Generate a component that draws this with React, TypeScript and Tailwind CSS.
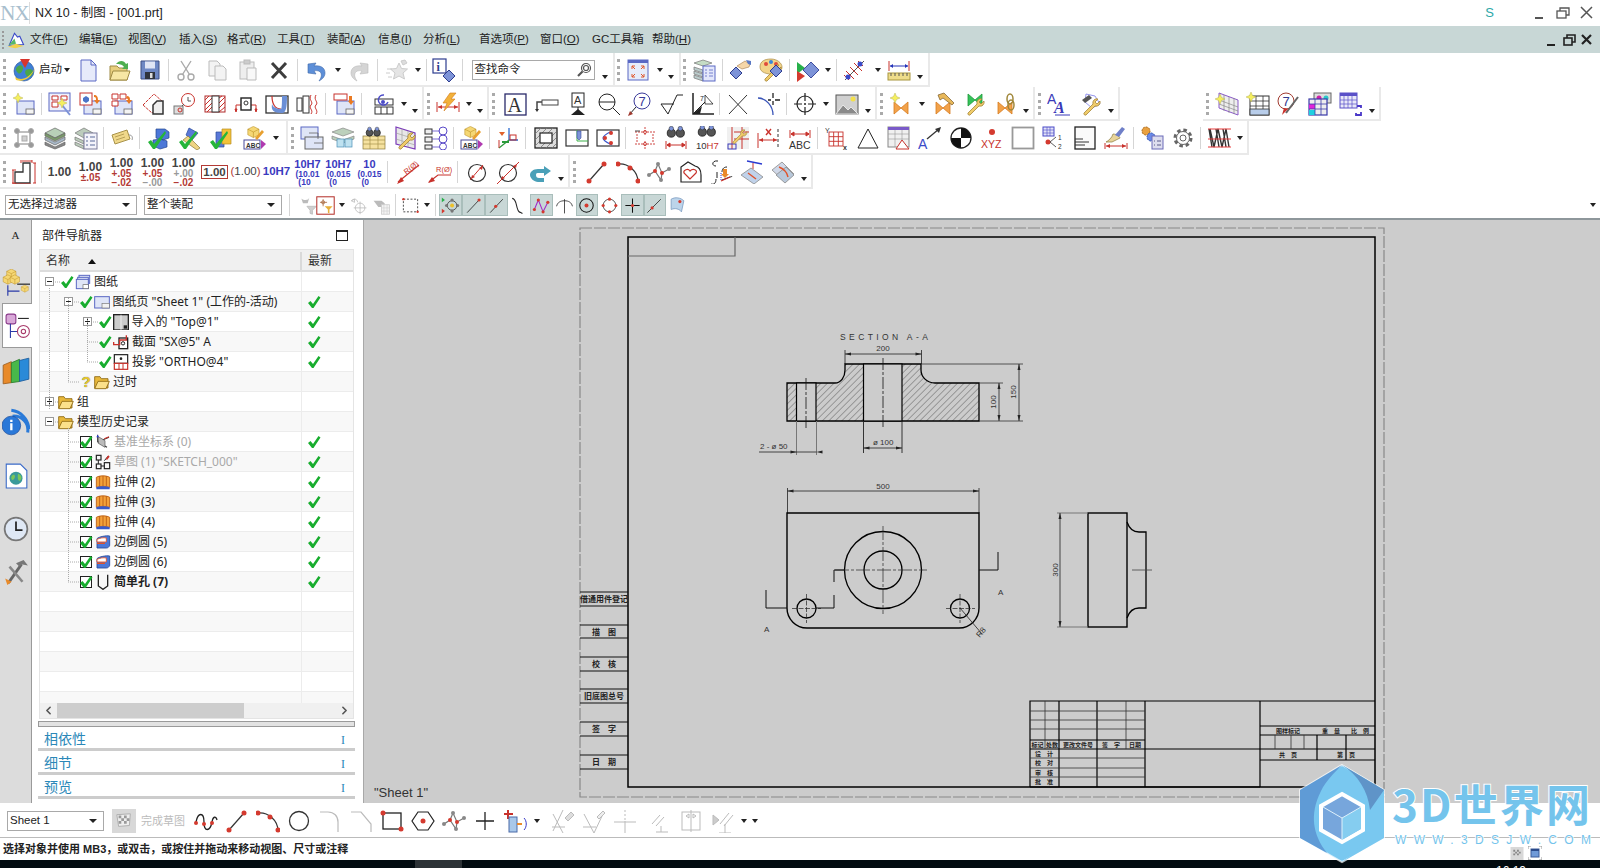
import React from "react";
import { ChevronLeft, ChevronRight } from "lucide-react";

const Dot = ({ x, y, c = "#d43a2f", r = 2 }: { x: number; y: number; c?: string; r?: number }) => (
  <circle cx={x} cy={y} r={r} fill={c} stroke="none" />
);

const RED = "#c8322c";
const BLU = "#5a68c4";
const Sht = () => (
  <>
    <rect x="5" y="9" width="17" height="13" fill="#dfe5f7" stroke={BLU} />
    <rect x="14" y="17" width="8" height="5" fill="#f4f4f4" stroke="#666" strokeWidth="0.8" />
  </>
);
const Spark = ({ x = 4, y = 5 }: { x?: number; y?: number }) => (
  <path transform={`translate(${x} ${y})`} d="M0-5 1.5-1.5 5 0 1.5 1.5 0 5-1.5 1.5-5 0-1.5-1.5z" fill="#f5ef5e" stroke="#b9b25a" strokeWidth=".5" />
);
const Wr = () => (
  <path d="M6 21l9-9a4 4 0 0 1 5-5l-3 3 2 2 3-3a4 4 0 0 1-5 5l-9 9a1.5 1.5 0 0 1-2-2z" fill="#f0cc6a" stroke="#a5853a" strokeWidth=".8" />
);
const Dia = ({ x = 8, y = 18 }: { x?: number; y?: number }) => (
  <path d={`M${x} ${y - 6}l6 6-6 6-6-6z`} fill="#7d93d8" stroke="#2e3d8f" />
);
const Ck = () => <path d="M2 16l3-2 3 4L19 5l1 2L9 23H7z" fill="#25b53a" stroke="none" />;
const Bow = ({ c = "#f2a24a" }: { c?: string }) => <path d="M5 10l7 6 7-6v12l-7-6-7 6z" fill={c} stroke="#d77b1f" strokeWidth=".8" />;
const Cube = () => (
  <>
    <path d="M12 2l8 4v8l-8 4-8-4V6z" fill="#f5d774" stroke="#b98d22" strokeWidth=".8" />
    <path d="M4 6l8 4 8-4M12 10v8" stroke="#b98d22" strokeWidth=".8" />
  </>
);
const DimL = ({ y = 20 }: { y?: number }) => (
  <path d={`M2 ${y - 4}v8M22 ${y - 4}v8M3 ${y}h18M3 ${y}l3-2v4zM21 ${y}l-3-2v4z`} stroke={RED} fill={RED} strokeWidth="1" />
);
const Binoc = () => (
  <>
    <circle cx="7" cy="9" r="4.5" fill="#555" stroke="#222" />
    <circle cx="17" cy="9" r="4.5" fill="#555" stroke="#222" />
    <circle cx="7" cy="4" r="2.5" fill="#7d93d8" stroke="#333" strokeWidth=".6" />
    <circle cx="17" cy="4" r="2.5" fill="#7d93d8" stroke="#333" strokeWidth=".6" />
  </>
);
const Grd = ({ x, y, w, h, c = "#444" }: { x: number; y: number; w: number; h: number; c?: string }) => (
  <g stroke={c} strokeWidth=".9" fill="none">
    <rect x={x} y={y} width={w} height={h} />
    <path d={`M${x + w / 3} ${y}v${h}M${x + (2 * w) / 3} ${y}v${h}M${x} ${y + h / 3}h${w}M${x} ${y + (2 * h) / 3}h${w}`} />
  </g>
);
const Ab = () => (
  <>
    <g transform="translate(2 -1) scale(.7)"><Cube /></g>
    <rect x="1" y="14" width="16" height="9" fill="#fff" stroke="#4a4a9a" />
    <text x="3" y="21.5" fontSize="6.5" fontWeight="700" fill="#333" stroke="none" fontFamily="Liberation Sans">ABC</text>
    <path d="M18 14l5 4-5 5z" fill="#b03ab0" stroke="none" />
    <path d="M12 12l7-8 2 2-7 8z" fill="#e8a030" stroke="none" />
  </>
);

const ICONS: Record<string, React.ReactNode> = {
  globe: (
    <>
      <circle cx="12" cy="13" r="10" fill="#3f7fd6" stroke="#1e4c96" strokeWidth=".6" />
      <path d="M5 9c3-3 6-2 6 1s-3 7-5 5-3-4-1-6zM14 12c3-2 7-1 7 2s-3 6-5 5-4-5-2-7z" fill="#4ba648" stroke="none" />
      <path d="M3 19c6 4 14 2 20-9-3 9-11 15-19 12z" fill="#f1cb3c" stroke="none" />
      <path d="M8 1h10l-5 9z" fill="#d8352d" stroke="none" />
    </>
  ),
  file: (
    <>
      <path d="M5 2h10l5 5v16H5z" fill="#e6eafa" stroke={BLU} />
      <path d="M15 2v5h5" stroke={BLU} />
    </>
  ),
  folder: (
    <>
      <path d="M3 8h7l2 2h8v12H3z" fill="#e8cf7e" stroke="#9f8b45" />
      <path d="M3 22l3-9h17l-3 9z" fill="#f7e7a4" stroke="#9f8b45" />
      <path d="M9 6c3-4 8-4 10 0l2-1v6h-6l2-2c-2-3-5-3-8-3z" fill="#4fae4f" stroke="none" />
    </>
  ),
  save: (
    <>
      <path d="M3 3h18v18H3z" fill="#6e88c4" stroke="#3c4f84" />
      <rect x="7" y="3.5" width="10" height="7" fill="#dfe5f5" stroke="none" />
      <rect x="7" y="14" width="10" height="7" fill="#30343c" stroke="none" />
      <rect x="12" y="15" width="2.5" height="5" fill="#ddd" stroke="none" />
    </>
  ),
  cut: (
    <g stroke="#aaa" strokeWidth="1.4">
      <circle cx="7" cy="19" r="3" />
      <circle cx="17" cy="19" r="3" />
      <path d="M8.5 16.5L17 3M15.5 16.5L7 3" />
    </g>
  ),
  copy: (
    <g stroke="#bbb" fill="#f3f3f3">
      <path d="M4 3h8l3 3v12H4z" />
      <path d="M10 8h8l3 3v11H10z" />
    </g>
  ),
  paste: (
    <g stroke="#bbb" fill="#eee">
      <rect x="4" y="4" width="14" height="17" />
      <rect x="8" y="2" width="6" height="4" fill="#ccc" />
      <path d="M11 10h9v12h-9z" fill="#f8f8f8" />
    </g>
  ),
  del: <path d="M5 5l14 15M19 5L5 20" stroke="#3d3d3d" strokeWidth="3" />,
  undo: <path d="M3 6l8-1-2 3c7-1 11 2 11 7 0 3-2 6-6 8 2-3 3-5 2-8-1-2-4-3-7-2l2 3-8-1z" fill="#5d8fd8" stroke="#3e68aa" strokeWidth=".6" />,
  redo: <path d="M21 6l-8-1 2 3c-7-1-11 2-11 7 0 3 2 6 6 8-2-3-3-5-2-8 1-2 4-3 7-2l-2 3 8-1z" fill="#d5d5d5" stroke="#bbb" strokeWidth=".6" />,
  star: (
    <g stroke="#ccc" fill="#e5e5e5">
      <path d="M14 5l2.500 5.500 6 .5-4.500 4 1.500 6-5.500-3-5.500 3 1.500-6-4.500-4 6-.5z" />
      <path d="M2 11h5M1 15h4M3 19h4" />
      <path d="M16 3l4-1 2 3-4 2z" fill="#ddd" />
    </g>
  ),
  info: (
    <>
      <rect x="1" y="1" width="13" height="14" fill="#fff" stroke="#2e3d8f" strokeWidth="1.200" />
      <text x="4.500" y="12.500" fontSize="12" fontWeight="700" fill="#2e3d8f" stroke="none" fontFamily="Liberation Serif">i</text>
      <path d="M17 12l6 6-6 6-6-6z" fill="#7d93d8" stroke="#2e3d8f" />
    </>
  ),
  fit: (
    <>
      <rect x="2" y="2" width="20" height="20" fill="#e6ecfa" stroke={BLU} />
      <rect x="2" y="2" width="20" height="3" fill={BLU} stroke="none" />
      <path d="M6 8l3 3M6 8h3M6 8v3M18 8l-3 3M18 8h-3M18 8v3M6 19l3-3M6 19h3M6 19v-3M18 19l-3-3M18 19h-3M18 19v-3" stroke="#e0562a" />
    </>
  ),
  layers: (
    <>
      <path d="M2 5l9-3 9 3-9 3z" fill="#c5dcc5" stroke="#777" strokeWidth=".7" />
      <path d="M2 9l9 3v3l-9-3zM2 13l9 3v3l-9-3zM2 17l9 3v3l-9-3z" fill="#bcc" stroke="#777" strokeWidth=".7" />
      <rect x="11" y="8" width="12" height="15" fill="#e3e7fb" stroke={BLU} />
      <path d="M13 12h2M17 12h4M13 15h2M17 15h4M13 18h2M17 18h4" stroke={BLU} strokeWidth=".8" />
    </>
  ),
  hand: (
    <>
      <Dia x={8} y={15} />
      <path d="M9 8l8-5 5 3-1 3-7 2z" fill="#f5d6a8" stroke="#a57a4a" strokeWidth=".6" />
      <path d="M18 2l5 1v4l-3-1z" fill="#5a78c4" stroke="none" />
    </>
  ),
  palette: (
    <>
      <path d="M12 1c6 0 11 4 11 8s-4 4-6 4-2 3-5 3-11-1-11-7 5-8 11-8z" fill="#f2d48a" stroke="#a88840" strokeWidth=".7" />
      <Dot x={7} y={6} c="#e04a3a" />
      <Dot x={12} y={4} c="#3a88d8" />
      <Dot x={17} y={6} c="#e04a3a" />
      <Wr />
      <Dia x={17} y={13} />
    </>
  ),
  playd: (
    <>
      <path d="M2 4l8 6-8 6z" fill="#27b04a" stroke="none" />
      <path d="M2 13l8 5-8 6z" fill="#d43a2f" stroke="none" />
      <path d="M16 4l8 8-8 8-8-8z" fill="#7d93d8" stroke="#3e4d9f" />
    </>
  ),
  antenna: (
    <>
      <path d="M3 22L22 3" stroke="#555" />
      <path d="M4 13l8 8M8 9l8 8M12 5l8 8M2 17l5 5M16 3l5 5" stroke={RED} />
      <Dot x={18} y={6} c="#3a4ac8" r={2.500} />
      <Dot x={6} y={19} c="#3a4ac8" r={2.500} />
    </>
  ),
  ruler: (
    <>
      <rect x="1" y="15" width="22" height="7" fill="#eedc8a" stroke="#a8963f" />
      <path d="M4 15v3M8 15v3M12 15v3M16 15v3M20 15v3" stroke="#555" />
      <path d="M2 3v10M22 3v10" stroke={RED} />
      <path d="M3 8h18" stroke="#2433b8" />
      <path d="M3 8l3-2v4zM21 8l-3-2v4z" fill="#2433b8" stroke="none" />
    </>
  ),
  newsheet: (<><Sht /><Spark x={6} y={6} /></>),
  wand: (
    <>
      <rect x="1" y="1" width="21" height="18" fill="#eef0fb" stroke={BLU} />
      <path d="M4 4h6v4H4zM13 4h6v4h-6zM4 10h6v5H4z" stroke={RED} fill="#fff" />
      <path d="M14 13l8 10" stroke="#7d93d8" strokeWidth="2" />
      <Spark x={14} y={11} />
    </>
  ),
  sheetcube: (
    <>
      <Sht />
      <rect x="1" y="1" width="12" height="12" fill="#fff" stroke={RED} />
      <path d="M4 6l3-2 3 2v3l-3 2-3-2z" fill="#4c74c8" stroke="none" />
      <path d="M15 3c3 0 4 2 4 5h2l-3 4-3-4h2c0-2 0-3-2-3z" fill="#ea7a22" stroke="none" />
    </>
  ),
  gridsheet: (
    <>
      <Sht />
      <path d="M2 2h6v5H2zM10 2h6v5h-6zM2 9h6v5H2z" stroke={RED} fill="#fff" />
      <path d="M17 4c2 0 3 1 3 4h2l-3 4-3-4h2c0-1-1-2-2-2z" fill="#ea7a22" stroke="none" />
    </>
  ),
  sect: (
    <>
      <path d="M2 13L13 2l9 8-11 11z" fill="#fff" stroke={RED} strokeDasharray="3 1" />
      <path d="M12 22V13l4-4h6v13z" fill="#eee" stroke="#333" strokeWidth="1.500" />
    </>
  ),
  detail: (
    <>
      <rect x="2" y="14" width="9" height="8" fill="#ddd" stroke="#777" />
      <circle cx="8" cy="18" r="2" stroke={RED} />
      <circle cx="16" cy="8" r="6.500" fill="#fff" stroke={RED} />
      <path d="M10 14l2-2M16 5v4h3" stroke="#555" />
    </>
  ),
  hatch: (
    <>
      <rect x="2" y="4" width="20" height="16" fill="#fff" stroke="#b02a2a" />
      <path d="M2 8l4-4M2 13l7-7M2 18l7-7M4 20l5-5M16 6l3-2M16 11l6-6M16 16l6-6M16 20l6-5" stroke="#c8322c" />
      <rect x="9" y="4" width="7" height="16" fill="#fff" stroke="#333" />
    </>
  ),
  projsec: (
    <>
      <path d="M2 17V13h20v4" stroke={RED} />
      <rect x="7" y="6" width="10" height="12" fill="#fff" stroke="#222" strokeWidth="1.400" />
      <circle cx="12" cy="11" r="2" />
      <path d="M2 20l-1-3h2zM22 20l-1-3h2z" fill={RED} stroke={RED} />
    </>
  ),
  curve: (
    <>
      <rect x="1" y="4" width="22" height="17" fill="#fff" stroke="#333" strokeWidth="1.300" />
      <path d="M7 4c0 8 3 13 9 13" stroke={RED} strokeWidth="1.200" />
      <path d="M17 4c0 4 0 13-1 13-3 0-8-1-9-5-1 6 1 9 10 9 4 0 5-6 5-17z" fill="#6b8fd6" stroke="none" />
    </>
  ),
  broken: (
    <>
      <rect x="1" y="6" width="5" height="13" fill="#fff" />
      <rect x="7" y="4" width="6" height="17" fill="#fff" />
      <path d="M15 3c-3 5 3 7 0 10s3 5 0 9M20 3c-3 5 3 7 0 10s3 5 0 9" stroke={RED} />
    </>
  ),
  sheetarrow: (
    <>
      <Sht />
      <rect x="2" y="2" width="13" height="6" fill="#fff" stroke={RED} />
      <path d="M17 4h3v5h2l-3 4-3-4h1z" fill="#ea7a22" stroke="none" />
    </>
  ),
  swap: (
    <>
      <rect x="4" y="7" width="18" height="6" fill="#fff" />
      <rect x="4" y="15" width="18" height="7" fill="#fff" />
      <path d="M10 15v7M16 15v7" />
      <path d="M13 3a5 5 0 1 0 4 7" stroke="#4b4bc8" strokeWidth="1.500" />
      <circle cx="12" cy="10" r="2" fill="#4b4bc8" stroke="none" />
    </>
  ),
  bolt: (
    <>
      <path d="M1 10v10M23 10v10M2 15h20" stroke={RED} />
      <path d="M2 15l4-2v4zM22 15l-4-2v4z" fill={RED} stroke="none" />
      <path d="M14 1h6l-5 6h4L8 19l3-8H7z" fill="#f2b13a" stroke="#d2781a" strokeWidth=".6" />
    </>
  ),
  abox: (
    <>
      <rect x="1" y="2" width="21" height="21" fill="#fff" stroke="#2a2a6a" strokeWidth="1.300" />
      <text x="3.500" y="20" fontSize="20" fill="#333" stroke="none" fontFamily="Liberation Serif">A</text>
    </>
  ),
  flag: (
    <>
      <rect x="7" y="8" width="16" height="5" fill="#fff" stroke="#444" />
      <path d="M7 10H2v7" stroke="#444" strokeWidth="1.500" />
      <path d="M0 17h4l-2 3z" fill="#333" stroke="none" />
    </>
  ),
  abal: (
    <>
      <rect x="6" y="1" width="12" height="14" fill="#fff" stroke="#222" />
      <text x="8" y="12" fontSize="11" fill="#333" stroke="none" fontFamily="Liberation Sans">A</text>
      <path d="M12 15v3" stroke="#222" />
      <path d="M12 17l7 6H5z" fill="#222" stroke="none" />
    </>
  ),
  zoomc: (
    <>
      <circle cx="10" cy="10" r="8" fill="#fff" stroke="#222" />
      <path d="M2 10h16M16 16l7 7" stroke="#222" />
    </>
  ),
  seven: (
    <>
      <circle cx="14" cy="9" r="8" fill="#fff" stroke="#3a3a9a" />
      <text x="10.500" y="14" fontSize="13" fill="#3a3a9a" stroke="none" fontFamily="Liberation Sans">7</text>
      <path d="M8 15L1 23" stroke="#222" />
      <path d="M0 24l2-5 3 3z" fill="#a13a2f" stroke="none" />
    </>
  ),
  sqrt: <path d="M2 12l7 10L18 3h6M2 12h13" stroke="#222" />,
  angle: (
    <>
      <path d="M3 1v21h21" stroke="#222" strokeWidth="1.500" />
      <path d="M3 22l9-8-2 8z" fill="#222" stroke="none" />
      <path d="M3 22L17 8" stroke="#222" />
      <path d="M15 3l8 9H15z" fill="#fff" stroke="#222" strokeWidth=".8" />
      <text x="10" y="9" fontSize="7" fill="#222" stroke="none" fontFamily="Liberation Sans">7</text>
    </>
  ),
  xx: <path d="M3 3l18 19M21 3L3 22" stroke="#333" />,
  corner: (
    <>
      <path d="M1 6c8 0 15 8 15 17" stroke="#3a55b8" strokeWidth="1.300" />
      <path d="M16 1v5M16 9v4M11 8h3M18 8h5" stroke="#222" strokeWidth="1.300" />
    </>
  ),
  target: (
    <>
      <circle cx="12" cy="12" r="8" stroke="#222" strokeWidth="1.200" />
      <path d="M12 1v8M12 15v8M1 12h8M15 12h8" stroke="#222" strokeWidth="1.200" />
      <Dot x={12} y={12} c="#222" r={1} />
    </>
  ),
  photo: (
    <>
      <rect x="1" y="3" width="22" height="19" fill="#d0d0d0" stroke="#555" />
      <path d="M1 22l7-9 5 5 3-3 7 7z" fill="#8a8a8a" stroke="#fff" strokeWidth=".7" />
      <circle cx="18" cy="7" r="2.500" fill="#f3e04c" stroke="none" />
    </>
  ),
  bow1: (<><Bow /><Spark x={6} y={6} /></>),
  bow2: (
    <>
      <Bow />
      <path d="M7 3l6-2 10 10-2 2-9-7-3 2z" fill="#e8b85a" stroke="#7a5a2a" strokeWidth=".7" />
    </>
  ),
  bow3: (
    <>
      <path d="M6 2l7 6 7-6v12l-7-6-7 6z" fill="#34c25a" stroke="#1f9a3a" strokeWidth=".8" />
      <Wr />
    </>
  ),
  bow4: (
    <>
      <Bow />
      <ellipse cx="17" cy="7" rx="3" ry="5" stroke="#a0873a" strokeWidth="1.500" />
      <ellipse cx="18" cy="13" rx="3" ry="5" stroke="#a0873a" strokeWidth="1.500" />
    </>
  ),
  astyle: (
    <>
      <text x="0" y="12" fontSize="14" fill="#3a3ab8" stroke="none" fontFamily="Liberation Sans">A</text>
      <text x="7" y="21" fontSize="16" fontWeight="700" fontStyle="italic" fill="#3a3ab8" stroke="none" fontFamily="Liberation Serif">A</text>
      <path d="M8 23h15" stroke="#3a3ab8" />
    </>
  ),
  wrencha: (
    <>
      <path d="M8 2l9 2 5 8-8 4-7-6z" fill="#fff" stroke="#7a7ae8" strokeWidth=".8" />
      <path d="M4 8l7-5 3 3-7 5z" fill="#555" stroke="none" />
      <Wr />
    </>
  ),
  tnew: (
    <>
      <path d="M4 1l19 7v15L4 16z" fill="#eee" stroke="#8a5ac8" />
      <path d="M9 3v16M14 5v16M19 6v16M4 8l19 7M4 12l19 7" stroke="#888" strokeWidth=".7" />
      <Spark x={5} y={7} />
    </>
  ),
  tgrid: (
    <>
      <rect x="4" y="4" width="19" height="19" fill="#fff" stroke="#333" />
      <path d="M4 9h19M4 14h19M4 19h19M10 4v19M17 4v19" stroke="#333" strokeWidth=".8" />
      <rect x="4" y="17" width="19" height="6" fill="#b8cdea" stroke="#333" strokeWidth=".8" />
      <Spark x={5} y={5} />
    </>
  ),
  t7: (
    <>
      <circle cx="9" cy="9" r="8" fill="#fff" stroke="#a13a2f" />
      <text x="5.500" y="14" fontSize="13" fill="#333a8f" stroke="none" fontFamily="Liberation Sans">7</text>
      <path d="M21 5L9 21" stroke="#666" strokeWidth="2" />
      <path d="M11 17l-6 6 2-7z" fill="#c8322c" stroke="none" />
    </>
  ),
  tcolor: (
    <>
      <rect x="6" y="1" width="17" height="10" fill="#ddd" stroke="#666" />
      <Dot x={11} y={6} c="#d020a8" r={2.500} />
      <Dot x={18} y={6} c="#28c8c8" r={2.500} />
      <rect x="1" y="7" width="18" height="16" fill="#eee" stroke="#3a3aa8" strokeWidth="1.200" />
      <rect x="1" y="12" width="6" height="5" fill="#e024d8" stroke="none" />
      <rect x="1" y="18" width="6" height="5" fill="#20d0e0" stroke="none" />
      <path d="M7 7v16M13 7v16M1 12h18M1 17h18" stroke="#3a3aa8" strokeWidth=".8" />
    </>
  ),
  tlink: (
    <>
      <rect x="1" y="1" width="17" height="15" fill="#e8e8f8" stroke="#5a50c8" />
      <rect x="1" y="1" width="17" height="3" fill="#5a50c8" stroke="none" />
      <path d="M5 4v12M9 4v12M13 4v12M1 8h17M1 12h17" stroke="#5a50c8" strokeWidth=".7" />
      <path d="M18 14h4v2M22 20v3h-5v-2" stroke="#4a38c8" strokeWidth="1.800" />
    </>
  ),
  nodes: (
    <g stroke="#aaa" fill="#d0d0d0">
      <rect x="6" y="6" width="12" height="12" fill="none" strokeWidth="1.500" />
      <circle cx="5" cy="5" r="2.500" fill="#999" />
      <circle cx="19" cy="5" r="2.500" fill="#999" />
      <circle cx="5" cy="19" r="2.500" fill="#999" />
      <circle cx="19" cy="19" r="2.500" fill="#999" />
      <rect x="10" y="10" width="5" height="5" />
    </g>
  ),
  stack: (
    <g stroke="#666" strokeWidth=".7">
      <path d="M2 7l10-5 10 5-10 5z" fill="#b8d0b8" />
      <path d="M2 11l10 5 10-5v3l-10 5-10-5z" fill="#a8b8c8" />
      <path d="M2 16l10 5 10-5v3l-10 4-10-4z" fill="#888" />
      <path d="M2 7v3l10 5 10-5V7l-10 5z" fill="#7a9a6a" />
    </g>
  ),
  stacklist: (
    <>
      <g stroke="#777" strokeWidth=".7" fill="#bcccbc">
        <path d="M1 7l9-5 9 5-9 5zM1 11l9 4v3l-9-4zM1 16l9 4v3l-9-4z" />
      </g>
      <rect x="10" y="7" width="13" height="16" fill="#f4f4fb" stroke="#7a7a9a" />
      <path d="M12 11h2M16 11h5M12 15h2M16 15h5M12 19h2M16 19h5" stroke="#5a6a9a" />
    </>
  ),
  tag: (
    <>
      <path d="M2 9l15-5 3 9-15 5z" fill="#f0d88a" stroke="#a8924a" />
      <path d="M5 11l9-3M6 14l9-3" stroke="#a8924a" strokeWidth=".8" />
      <path d="M19 9c3 0 4 2 3 5" stroke="#999" />
    </>
  ),
  chk1: (
    <>
      <path d="M10 3h9l4 3v6l-6 2-7-2zM7 14l8-1 6 2v6l-7 2-7-3z" fill="#4c78d8" stroke="#27488f" strokeWidth=".7" />
      <Ck />
    </>
  ),
  chk2: (
    <>
      <path d="M12 2l9 5-6 7-6-5z" fill="#5a78d8" stroke="#2a4a9a" strokeWidth=".7" />
      <path d="M6 14l5-4 12 12-3 2z" fill="#efd484" stroke="#8a7a3a" strokeWidth=".7" />
      <Ck />
    </>
  ),
  chk3: (
    <>
      <path d="M8 6h8v15H8z" fill="#5a78d8" stroke="#2a4a9a" strokeWidth=".7" />
      <path d="M14 3h9v15h-9z" fill="#f2c23a" stroke="#b98d22" strokeWidth=".7" />
      <Ck />
    </>
  ),
  abc: <Ab />,
  sheets: (
    <>
      <rect x="1" y="1" width="17" height="12" fill="#dfe5f7" stroke={BLU} />
      <rect x="5" y="11" width="18" height="12" fill="#dfe5f7" stroke="#666" />
      <path d="M9 7h9v6M14 17h9" stroke="#666" strokeWidth=".8" />
    </>
  ),
  stack2: (
    <>
      <g stroke="#888" strokeWidth=".7" fill="#bcd0bc">
        <path d="M1 6l11-4 11 4-11 4zM1 10l11 4 11-4v3l-11 4-11-4z" />
      </g>
      <rect x="6" y="13" width="7" height="8" fill="#bfe2f0" stroke="#4a90b8" strokeWidth=".7" />
      <rect x="14" y="13" width="7" height="8" fill="#bfe2f0" stroke="#4a90b8" strokeWidth=".7" />
    </>
  ),
  binoct: (
    <>
      <rect x="1" y="10" width="22" height="13" fill="#f6e2a0" stroke="#8a7a3a" strokeWidth=".7" />
      <path d="M1 14h22M1 18h22M8 10v13M16 10v13" stroke="#a8924a" strokeWidth=".7" />
      <g transform="scale(.75) translate(3 0)"><Binoc /></g>
    </>
  ),
  wrmesh: (
    <>
      <path d="M3 1l19 6v16L3 18z" fill="#e8e8e8" stroke="#7a3ab8" strokeWidth="1.200" />
      <path d="M9 3v17M15 5v17M3 7l19 6M3 13l19 6" stroke="#999" strokeWidth=".6" />
      <Wr />
    </>
  ),
  list123: (
    <>
      <rect x="1" y="3" width="7" height="5" fill="#eee" stroke="#333" />
      <rect x="1" y="11" width="7" height="5" fill="#eee" stroke="#333" />
      <rect x="1" y="19" width="7" height="4" fill="#eee" stroke="#333" />
      <path d="M8 5h8M8 13h8M8 21h8" stroke="#5a4ac8" strokeWidth=".8" />
      <circle cx="19" cy="5" r="4" stroke="#5a4ac8" />
      <circle cx="19" cy="13" r="4" stroke="#5a4ac8" />
      <circle cx="19" cy="20.500" r="3.500" stroke="#5a4ac8" />
    </>
  ),
  axes: (
    <>
      <path d="M13 14V2M13 14h9" stroke="#2a6ad0" strokeWidth="1.300" />
      <path d="M13 14L3 22" stroke="#2a9a3a" strokeWidth="1.300" />
      <path d="M3 6h6l-3 4z" fill="#e0622a" stroke="none" />
      <rect x="14" y="9" width="6" height="5" stroke={RED} />
      <path d="M6 16h7" stroke="#2a9a3a" strokeWidth="2" />
      <path d="M3 14v8" stroke={RED} />
    </>
  ),
  hbox: (
    <>
      <rect x="1" y="2" width="22" height="20" fill="#ddd" stroke="#222" strokeWidth="1.300" />
      <path d="M1 8l6-6M1 14l12-12M1 20L19 2M6 22l16-16M12 22l10-10M18 22l4-4" stroke="#777" strokeWidth=".8" />
      <rect x="6" y="7" width="12" height="10" fill="#fff" stroke="#222" strokeWidth="1.200" />
    </>
  ),
  vbox: (
    <>
      <rect x="1" y="4" width="22" height="16" fill="#fff" stroke="#333" strokeWidth="1.200" />
      <path d="M12 4v11h11" stroke="#3eb04a" />
      <path d="M12 5h4v7l-2 2-2-2z" fill="#7d93d8" stroke="#3a4a9a" strokeWidth=".6" />
    </>
  ),
  cbox: (
    <>
      <rect x="1" y="4" width="22" height="16" fill="#fff" stroke="#333" strokeWidth="1.200" />
      <path d="M16 5c-6 3-9 5-9 7 0 3 5 5 9 7" stroke="#3a55c8" strokeWidth="1.200" />
      <Dot x={15} y={7} />
      <Dot x={9} y={12} />
      <Dot x={15} y={17} />
    </>
  ),
  dashg: (
    <g stroke="#c8322c" strokeWidth=".9">
      <path d="M2 6h8M14 6h8M2 18h8M14 18h8M12 1v8M12 15v8M4 8v8M20 8v8" strokeDasharray="2 1" />
      <circle cx="12" cy="6" r="1.500" />
      <circle cx="12" cy="18" r="1.500" />
      <path d="M2 5h5" stroke="#333" />
    </g>
  ),
  bindim: (<><g transform="translate(1 -1) scale(.9)"><Binoc /></g><DimL y={19} /></>),
  bin10: (
    <>
      <g transform="translate(1 -2) scale(.9)"><Binoc /></g>
      <text x="1" y="23" fontSize="9.500" fill="#333" stroke="none" fontFamily="Liberation Sans">10<tspan fill={RED}>H7</tspan></text>
    </>
  ),
  wrdim: (
    <>
      <rect x="1" y="1" width="22" height="22" fill="#f0f0f0" stroke="none" />
      <path d="M8 6h15M8 13h15M6 1v22M16 1v22" stroke={RED} />
      <rect x="2" y="18" width="8" height="5" stroke="#3a3ab8" />
      <g transform="translate(2 -2) scale(.85)"><Wr /></g>
    </>
  ),
  xdim: (
    <>
      <path d="M1 7v15M2 14h18" stroke={RED} />
      <path d="M21 3v19" strokeDasharray="3 2" stroke="#333" />
      <path d="M9 3l5 6M14 3L9 9" stroke={RED} strokeWidth="1.400" />
      <path d="M2 14l4-2v4zM20 14l-4-2v4z" fill={RED} stroke="none" />
    </>
  ),
  abcdim: (
    <>
      <DimL y={8} />
      <text x="1" y="23" fontSize="10.500" fill="#333" stroke="none" fontFamily="Liberation Sans">ABC</text>
    </>
  ),
  ygrid: (
    <>
      <text x="0" y="7" fontSize="7" fill="#333" stroke="none" fontFamily="Liberation Sans">Y</text>
      <Grd x={4} y={6} w={14} h={14} c={RED} />
      <text x="18" y="24" fontSize="7" fontWeight="700" fill="#333" stroke="none" fontFamily="Liberation Sans">x</text>
    </>
  ),
  tri: <path d="M12 3L22 22H2z" stroke="#222" />,
  tabletri: (
    <>
      <rect x="1" y="1" width="21" height="20" fill="#f0f0f0" stroke="#888" />
      <rect x="1" y="1" width="21" height="3" fill="#7a5ac8" stroke="none" />
      <path d="M1 8h21M1 13h21M8 4v17M15 4v17" stroke="#999" strokeWidth=".6" />
      <path d="M15 14l7 9H9z" fill="#fff" stroke={RED} />
    </>
  ),
  aarrow: (
    <>
      <text x="0" y="23" fontSize="14" fill="#3a4ac8" stroke="none" fontFamily="Liberation Sans">A</text>
      <path d="M9 13L21 3" stroke="#333" strokeWidth="1.300" />
      <path d="M23 1l-2 6-4-4z" fill="#333" stroke="none" />
    </>
  ),
  ball: (
    <>
      <circle cx="12" cy="12" r="10" fill="#fff" stroke="#222" strokeWidth="1.300" />
      <path d="M12 2a10 10 0 0 1 10 10H12zM12 22A10 10 0 0 1 2 12h10z" fill="#111" stroke="none" />
    </>
  ),
  xyz: (
    <>
      <Dot x={12} y={6} r={3} />
      <text x="1" y="22" fontSize="10.500" fill={RED} stroke="none" fontFamily="Liberation Sans">XYZ</text>
    </>
  ),
  blank: <rect x="1.500" y="1.500" width="21" height="21" fill="#fff" stroke="#999" strokeWidth="1.800" />,
  tbl12: (
    <>
      <rect x="1" y="1" width="11" height="9" fill="#e3e3f8" stroke="#4a4ac8" />
      <path d="M1 4h11M1 7h11M5 1v9M8 1v9" stroke="#4a4ac8" strokeWidth=".6" />
      <Dot x={6} y={16} r={2.500} />
      <path d="M8 16l6-5M8 16l6 5" stroke="#333" strokeWidth=".8" />
      <text x="16" y="14" fontSize="6.500" fill="#333" stroke="none" fontFamily="Liberation Sans">1</text>
      <text x="16" y="23" fontSize="6.500" fill="#333" stroke="none" fontFamily="Liberation Sans">2</text>
    </>
  ),
  note: (
    <>
      <rect x="2" y="1" width="20" height="22" fill="#fafafa" stroke="#222" strokeWidth="1.300" />
      <path d="M2 13h8M2 16h14M2 19h10" stroke="#333" />
    </>
  ),
  broom: (
    <>
      <path d="M9 8c4 0 7 3 7 4l-8 4H2c2-1 6-4 7-8z" fill="#e8d49a" stroke="#8a7a3a" strokeWidth=".7" />
      <path d="M11 9l7-8 3 2-6 8z" fill="#6f7fc8" stroke="none" />
      <path d="M1 17v6M23 17v6M2 20h20" stroke={RED} />
      <path d="M2 20l4-2v4zM22 20l-4-2v4z" fill={RED} stroke="none" />
    </>
  ),
  gears: (
    <>
      <circle cx="6" cy="5" r="4" fill="#e8a040" stroke="#a86a20" strokeDasharray="2 1" />
      <circle cx="11" cy="11" r="4" fill="#6a8ae8" stroke="#3a5ab0" strokeDasharray="2 1" />
      <rect x="12" y="10" width="11" height="13" fill="#dde" stroke="#6a6ab8" />
      <path d="M14 15h1M17 15h4M14 19h1M17 19h4" stroke="#5a5a8a" />
    </>
  ),
  gear: (
    <>
      <circle cx="12" cy="12" r="8" stroke="#666" strokeWidth="3" strokeDasharray="3.500 2.800" />
      <circle cx="12" cy="12" r="6.500" stroke="#666" fill="#fff" />
      <circle cx="12" cy="12" r="3" stroke="#666" />
    </>
  ),
  spring: (
    <>
      <path d="M3 3l4 18 4-18 4 18 4-18 3 18M2 3l3 18M9 3l3 18M16 3l3 18" stroke="#333" strokeWidth="1.400" />
      <path d="M1 3h23M1 13h23M1 21h23" stroke="#e83a3a" />
    </>
  ),
  dim: (
    <>
      <path d="M3 23V12h8V3h7v20z" fill="#fff" stroke="#333" strokeWidth="1.300" />
      <path d="M1 10v14M0 10h4M0 23h4M10 1h10M9 0v3M20 0v3M23 3v20M21 3h3M21 23h3M1 24h18" stroke={RED} />
    </>
  ),
  r1: (
    <>
      <path d="M1 22L22 5" stroke={RED} strokeWidth="1.200" />
      <path d="M0 24l7-3-3-4z" fill={RED} stroke="none" />
      <text x="7" y="12" transform="rotate(-38 12 10)" fontSize="7.500" fill={RED} stroke="none" fontFamily="Liberation Sans">R(Ø)</text>
    </>
  ),
  r2: (
    <>
      <path d="M1 22l9-7h13" stroke={RED} strokeWidth="1.200" />
      <path d="M0 23l7-2-3-4z" fill={RED} stroke="none" />
      <text x="8" y="12" fontSize="7.500" fill={RED} stroke="none" fontFamily="Liberation Sans">R(Ø)</text>
    </>
  ),
  cir1: (
    <>
      <circle cx="11" cy="13" r="8.500" stroke="#333" strokeWidth="1.200" />
      <path d="M4 20L17 5" stroke={RED} />
      <path d="M5 19l1-4 3 2zM17 6l-4 2 3 2z" fill={RED} stroke="none" />
    </>
  ),
  cir2: (
    <>
      <circle cx="11" cy="13" r="8.500" stroke="#333" strokeWidth="1.200" />
      <path d="M0 24L22 2" stroke={RED} />
      <path d="M4 20l1-4 3 2zM20 4l-4 2 3 2z" fill={RED} stroke="none" />
    </>
  ),
  ret: <path d="M2 11l7-5v3h6c5 0 8 3 8 6s-4 7-8 7H9v-4h5c2 0 3-1 3-3s-1-2-3-2H9v3z" fill="#4aa0b8" stroke="none" transform="matrix(-1 0 0 1 25 0)" />,
  line2: (
    <>
      <path d="M4 21L19 4" stroke="#333" strokeWidth="1.200" />
      <Dot x={4} y={21} r={2.500} />
      <Dot x={19} y={4} r={2.500} />
    </>
  ),
  arc3: (
    <>
      <path d="M2 4c10-1 20 7 20 18" stroke="#333" strokeWidth="1.200" />
      <Dot x={2} y={4} r={2.500} />
      <Dot x={14} y={8} r={2.500} />
      <Dot x={22} y={21} r={2.500} />
    </>
  ),
  poly: (
    <>
      <path d="M2 15l6-4 3-7 4 9 7-4M8 11l6 9 1-7" stroke="#777" strokeWidth="1.200" />
      <Dot x={8} y={11} />
      <Dot x={15} y={13} />
      <Dot x={11} y={4} c="#888" />
      <Dot x={2} y={15} c="#888" />
      <Dot x={22} y={9} c="#888" />
      <Dot x={14} y={20} c="#888" />
    </>
  ),
  heart: (
    <>
      <path d="M3 22V7l7-5 7 4c5 1 6 5 6 9v7z" stroke="#222" strokeWidth="1.200" />
      <path d="M12 19l-6-6c-1-3 4-5 6-2 3-3 8-1 6 2z" stroke={RED} strokeWidth="1.200" />
    </>
  ),
  sksec: (
    <>
      <path d="M9 1c-6-1-7 5-2 5M8 12v6M2 24c3 1 5-1 5-5M18 7c-4 0-5 3-5 5M13 20l8-3c1 0 2-1 2 0" stroke="#222" />
      <path d="M12 13v8" stroke="#2a3ad0" strokeDasharray="1 1" />
      <path d="M14 9h4v5h2l-4 4-4-4h2z" fill="#ea8a2a" stroke="none" />
      <path d="M12 21l9-4" stroke={RED} strokeWidth="1.300" />
    </>
  ),
  surf1: (
    <>
      <path d="M7 1l15 3" stroke="#2a3ad0" strokeWidth="1.500" />
      <path d="M13 3v6" stroke={RED} />
      <path d="M1 15l10-7 12 9-9 7z" fill="#c0d2ea" stroke="#8a8a8a" strokeWidth=".8" />
      <path d="M8 13l8 6" stroke="#e0522a" strokeWidth="1.400" />
    </>
  ),
  surf2: (
    <>
      <path d="M1 10l10-8 12 12-9 8z" fill="#d0d8e8" stroke="#8a8a8a" strokeWidth=".8" />
      <path d="M5 15l10-8 8 8-9 8z" fill="#b8c8da" stroke="#8a8a8a" strokeWidth=".8" />
      <path d="M8 7c5 2 8 5 9 10" stroke="#e0522a" strokeWidth="1.400" />
    </>
  ),
  f1: (
    <>
      <path d="M3 3c3 3 9 3 10-1l-2 7H5z" fill="#bbb" stroke="none" />
      <path d="M10 13h12l-5 5v5l-3-1v-4z" fill="#d0d0d0" stroke="#bbb" />
    </>
  ),
  f2: (
    <>
      <rect x="1" y="1" width="22" height="22" fill="#fff" stroke="#b5322c" strokeWidth="1.300" />
      <path d="M9 4v9M5 8h9" stroke="#a8663a" />
      <circle cx="9" cy="8" r="2" stroke="#a8663a" />
      <path d="M11 13h10l-4 4v5l-2-1v-4z" fill="#e8b03a" stroke="none" />
    </>
  ),
  f3: (
    <>
      <path d="M3 6c3-3 7-3 8 2M3 6l4-2v4z" stroke="#bbb" />
      <circle cx="14" cy="15" r="6" stroke="#bbb" />
      <path d="M14 7v16M6 15h16" stroke="#bbb" />
    </>
  ),
  f4: (
    <>
      <path d="M2 6h10l4 3v5H8z" fill="#bbb" stroke="none" />
      <rect x="12" y="11" width="10" height="12" fill="#f3f3f3" stroke="#ccc" />
      <path d="M15 11v12M19 11v12M12 15h10M12 19h10" stroke="#ccc" strokeWidth=".7" />
    </>
  ),
  sel: (
    <>
      <rect x="3" y="4" width="18" height="16" stroke="#222" strokeDasharray="2.500 2" />
      <Dot x={3} y={4} r={1.500} />
      <Dot x={21} y={20} r={1.500} />
    </>
  ),
  s1: (
    <>
      <circle cx="14" cy="12" r="6" stroke="#333" />
      <circle cx="14" cy="5" r="2" fill="#777" stroke="none" />
      <circle cx="14" cy="19" r="2" fill="#777" stroke="none" />
      <circle cx="7" cy="12" r="2" fill="#777" stroke="none" />
      <circle cx="21" cy="12" r="2" fill="#777" stroke="none" />
      <Dot x={14} y={12} c="#ecc12a" r={2.500} />
      <path d="M1 2l4 3-4 3z" fill="#27b04a" stroke="none" />
      <path d="M1 16l4 3-4 3z" fill="#d43a2f" stroke="none" />
    </>
  ),
  s2: (<><path d="M4 21L20 4" stroke="#222" /><Dot x={19} y={5} /></>),
  s3: (<><path d="M4 21L20 4" stroke="#222" /><Dot x={11} y={13} /></>),
  s4: <path d="M4 3c7 0 4 16 10 18M13 20l4 2" stroke="#222" strokeWidth="1.300" />,
  s5: (
    <>
      <path d="M3 17l5-12 6 15 6-12" stroke="#a02ac8" strokeWidth="1.300" />
      <Dot x={3} y={17} />
      <Dot x={8} y={5} />
      <Dot x={14} y={20} />
      <Dot x={20} y={8} />
    </>
  ),
  s6: <path d="M2 13c1-5 5-7 10-7s9 2 10 7M12 4v18" stroke="#222" />,
  s7: (<><circle cx="12" cy="12" r="8.500" stroke="#111" strokeWidth="1.300" /><Dot x={12} y={12} r={2.500} /></>),
  s8: (
    <>
      <circle cx="12" cy="12" r="8" stroke="#333" />
      <Dot x={12} y={4} />
      <Dot x={12} y={20} />
      <Dot x={4} y={12} />
      <Dot x={20} y={12} />
    </>
  ),
  s9: (<><path d="M3 12h18M12 3v18" stroke="#111" strokeWidth="1.300" /><Dot x={12} y={12} /></>),
  s10: (<><path d="M3 21L20 4" stroke="#222" /><Dot x={9} y={15} /></>),
  s11: (
    <>
      <path d="M4 4c5-3 12-2 16 2l-3 14c-3-4-8-5-13-3z" fill="#bcd4ea" stroke="#7a9ac0" />
      <Dot x={15} y={7} />
    </>
  ),
  bcurve: (
    <>
      <path d="M2 13c2-10 8-10 8 0s6 10 8 0c1-6 4-6 5-2" stroke="#222" strokeWidth="1.300" />
      <Dot x={2} y={14} />
      <Dot x={10} y={15} />
      <Dot x={18} y={14} />
    </>
  ),
  bcircle: <circle cx="12" cy="12" r="9.500" stroke="#333" strokeWidth="1.300" />,
  bfil1: <path d="M2 3h8c6 0 10 4 10 10v10" stroke="#bbb" strokeWidth="1.200" />,
  bfil2: <path d="M2 3h10l10 12v8" stroke="#bbb" strokeWidth="1.200" />,
  brect: (
    <>
      <rect x="3" y="4" width="18" height="16" stroke="#222" strokeWidth="1.300" />
      <Dot x={3} y={4} r={2.500} />
      <Dot x={21} y={20} r={2.500} />
    </>
  ),
  bhex: (<><path d="M7 3h10l6 9-6 9H7l-6-9z" stroke="#222" strokeWidth="1.200" /><Dot x={12} y={12} r={2.500} /></>),
  bplus: <path d="M12 3v18M3 12h18" stroke="#222" strokeWidth="1.300" />,
  bcyl: (
    <>
      <path d="M4 1v9M0 5h9" stroke={RED} strokeWidth="2" />
      <rect x="5" y="8" width="8" height="15" fill="#a8c8ea" stroke="#4a6aa8" />
      <path d="M13 15h5" stroke="#ea8a2a" strokeWidth="2" />
      <path d="M20 9c3 3 3 9 0 12" stroke="#3a3ac8" />
    </>
  ),
  t1: (
    <g stroke="#bbb">
      <path d="M2 5l10 19M12 1L2 22" />
      <path d="M1 18h13" />
      <path d="M14 9l6-6 3 3-6 6z" fill="#ddd" />
    </g>
  ),
  t2: (
    <g stroke="#bbb">
      <path d="M2 5l10 19M12 24L21 5" />
      <path d="M1 18h13" />
      <path d="M15 8l6-6 2 2-6 6z" fill="#eee" />
    </g>
  ),
  t3: (
    <g stroke="#bbb">
      <path d="M1 13h22M12 12v12" />
      <path d="M12 1v10" strokeDasharray="2 2" />
    </g>
  ),
  p1: <g stroke="#bbb"><path d="M3 15L11 6M7 17l8-9M12 23v-6M7 23h12" /></g>,
  p2: (
    <g stroke="#bbb">
      <rect x="2" y="3" width="18" height="18" />
      <path d="M11 1v22M6 7l3-2v4zM16 7l-3-2v4z" />
    </g>
  ),
  p3: (
    <g stroke="#bbb">
      <path d="M2 6l6 5-6 5z" fill="#ccc" />
      <path d="M9 15l9-11M13 17l9-11M14 24V15M8 24h12" />
    </g>
  ),
  parts: (
    <>
      <g transform="translate(2 -1) scale(.5)"><Cube /></g>
      <g transform="translate(-1 4) scale(.5)"><Cube /></g>
      <g transform="translate(5 4) scale(.5)"><Cube /></g>
      <g transform="translate(15 13) scale(.38)"><Cube /></g>
      <path d="M5 14v9M5 19h10" stroke="#2a3aa8" />
      <path d="M13 13h11" stroke="#222" />
    </>
  ),
  assy: (
    <>
      <rect x="1" y="1" width="9" height="9" rx="2" fill="#d8a8d8" stroke="#8a3a8a" />
      <path d="M5 10v13M5 17h7" stroke="#2a3aa8" />
      <path d="M12 5h10" stroke="#222" />
      <circle cx="17" cy="17" r="5.500" stroke="#a83a6a" />
      <circle cx="17" cy="17" r="2" stroke="#a83a6a" />
    </>
  ),
  books: (
    <>
      <path d="M1 7l7-3v18l-7 1z" fill="#e88a2a" stroke="#9a5a1a" strokeWidth=".7" />
      <path d="M8 5l7-3v19l-7 1z" fill="#48b84a" stroke="#2a7a2a" strokeWidth=".7" />
      <path d="M15 3l8-2v18l-8 2z" fill="#2a8ad8" stroke="#1a5a9a" strokeWidth=".7" />
    </>
  ),
  wifi: (
    <>
      <path d="M9 7a12 12 0 0 1 13 14M8 2a17 17 0 0 1 15 16" stroke="#2a7ad8" strokeWidth="2.600" />
      <circle cx="8" cy="15" r="8" fill="#2a78d8" stroke="#1a4a9a" strokeWidth=".6" />
      <path d="M7 10h2v2H7zM7 13h2v6H7z" fill="#fff" stroke="none" />
    </>
  ),
  docg: (
    <>
      <path d="M3 1h13l6 6v16H3z" fill="#fff" stroke="#3a6ac8" />
      <circle cx="12" cy="14" r="6" fill="#3a9a9a" stroke="none" />
      <path d="M8 12c3-3 4 1 2 3s-3-1-2-3zM14 10c3 1 4 4 2 6s-3-3-2-6z" fill="#7ac85a" stroke="none" />
    </>
  ),
  clock: (
    <>
      <circle cx="12" cy="12" r="10.500" fill="#dfe8f5" stroke="#777" strokeWidth="1.600" />
      <path d="M12 5v8h6" stroke="#222" strokeWidth="1.600" />
    </>
  ),
  tools: (
    <>
      <path d="M5 22L17 5" stroke="#666" strokeWidth="2.600" />
      <path d="M12 4l7-3 4 5-5-1-3 2z" fill="#777" stroke="none" />
      <path d="M6 7l12 14" stroke="#888" strokeWidth="2.400" />
      <path d="M2 18l6 3-4 3z" fill="#e88a2a" stroke="none" />
    </>
  ),
  tsheets: (
    <>
      <rect x="6" y="2" width="16" height="12" fill="#dfe5f7" stroke="#5a68c4" strokeWidth="1.500" />
      <rect x="4" y="5" width="16" height="12" fill="#dfe5f7" stroke="#5a68c4" strokeWidth="1.500" />
      <rect x="2" y="8" width="18" height="14" fill="#dfe5f7" stroke="#5a68c4" strokeWidth="1.500" />
      <rect x="12" y="16" width="8" height="6" fill="#fff" stroke="#666" />
    </>
  ),
  tsheet: (
    <>
      <rect x="1" y="4" width="22" height="17" fill="#dfe5f7" stroke="#5a68c4" strokeWidth="1.500" />
      <rect x="12" y="14" width="11" height="7" fill="#f2f2f2" stroke="#777" />
    </>
  ),
  ttop: (
    <>
      <rect x="1" y="1" width="22" height="23" fill="#ccc" stroke="#222" strokeWidth="2" />
      <path d="M12 1v23" stroke="#fff" />
      <rect x="16" y="17" width="5" height="5" fill="#222" stroke="none" />
    </>
  ),
  tsec: (
    <>
      <rect x="9" y="6" width="13" height="16" fill="#fff" stroke="#222" strokeWidth="2" />
      <path d="M1 12v4h9V9h10V2" stroke={RED} strokeWidth="2" />
      <circle cx="15" cy="14" r="2.500" stroke="#222" strokeWidth="1.500" />
    </>
  ),
  tproj: (
    <>
      <rect x="2" y="1" width="20" height="13" fill="#fff" stroke="#222" strokeWidth="1.800" />
      <Dot x={12} y={7} c="#222" r={2} />
      <rect x="2" y="14" width="20" height="9" fill="#fff" stroke={RED} strokeWidth="1.800" />
      <path d="M9 14v9M15 14v9" stroke={RED} strokeWidth="1.500" />
    </>
  ),
  tfolder: (
    <>
      <path d="M1 4h8l2 3h10v14H1z" fill="#e8b83a" stroke="#8f6a12" strokeWidth="1.300" />
      <path d="M1 22l5-11h17l-5 11z" fill="#fbe08a" stroke="#8f6a12" strokeWidth="1.300" />
    </>
  ),
  tcsys: (
    <>
      <path d="M4 1v11M4 12l14 8M4 12l17-7" stroke="#333" strokeWidth="1.600" />
      <path d="M5 4l10 6v10l-10-6z" fill="#bbb" stroke="#555" />
      <path d="M14 7l7-3" stroke={RED} strokeWidth="1.600" />
      <path d="M4 1l-2 4h4z" fill="#2a3ad0" stroke="none" />
    </>
  ),
  tsketch: (
    <>
      <rect x="2" y="2" width="7" height="7" stroke="#222" strokeWidth="1.800" />
      <rect x="2" y="15" width="7" height="7" stroke="#222" strokeWidth="1.800" />
      <rect x="14" y="13" width="8" height="9" stroke="#222" strokeWidth="1.800" />
      <path d="M5 9v6M9 18h5M14 10l6-7" stroke="#222" strokeWidth="1.500" />
      <path d="M16 7l4-5 2 2-4 5z" fill={RED} stroke="none" />
    </>
  ),
  textr: (
    <>
      <path d="M2 5c5-3 15-3 20 0v15c-5-2-15-2-20 0z" fill="#f4a23a" stroke="#b85a12" strokeWidth="1.300" />
      <path d="M7 3v16M12 3v16M17 3v16" stroke="#b85a12" strokeWidth="1.300" />
      <path d="M2 20c5-2 15-2 20 0v3H2z" fill="#3a5ac8" stroke="none" />
    </>
  ),
  tblend: (
    <>
      <path d="M3 7c3-3 14-5 19-4v14c-1 3-3 4-5 4H3z" fill="#4a78d8" stroke="#2a4a9a" strokeWidth="1.300" />
      <path d="M3 8c4-2 10-3 14-2v6H3z" fill="#fff" stroke="#e0522a" strokeWidth="1.300" />
      <path d="M3 14h12" stroke="#e0522a" strokeWidth="2" />
    </>
  ),
  thole: <path d="M5 1v17l7 5 7-5V1" stroke="#222" strokeWidth="2" />,
  logo: (
    <>
      <path d="M3 19L10 3l4 5 3-1 5 11z" fill="#fff" stroke="#3a4ac8" strokeWidth="1.500" />
      <path d="M1 21l11-4 10 3-11 3z" fill="#f0d04a" stroke="none" />
      <path d="M2 19l8-9 2 7z" fill="#58b868" stroke="none" />
    </>
  ),
};

function Ico({ n, cls = "w-6 h-6" }: { n: string; cls?: string }) {
  return (
    <svg viewBox="0 0 24 24" className={cls} fill="none" stroke="#333" strokeWidth="1">
      {ICONS[n]}
    </svg>
  );
}

function Stack({ a, rows }: { a: string; rows: [string, string][] }) {
  return (
    <div className="flex flex-col items-center leading-[9.500px] font-semibold">
      <span className="text-[12px] text-[#444] leading-[12px]">{a}</span>
      {rows.map(([t, c]) => (
        <span key={t} className={`text-[10px] ${c}`}>{t}</span>
      ))}
    </div>
  );
}

function Tol({ a, b, c }: { a: string; b: string; c: string }) {
  return (
    <div className="flex flex-col items-center text-[#3a3ac0] font-semibold">
      <span className="text-[11px] leading-[12px]">{a}</span>
      <span className="text-[8.500px] leading-[8px]">{b}</span>
      <span className="text-[8.500px] leading-[8px] self-start pl-[4px]">({c}</span>
    </div>
  );
}

const TXT: Record<string, React.ReactNode> = {
  n1: <span className="text-[12px] text-[#444] font-semibold">1.00</span>,
  n2: <Stack a="1.00" rows={[["±.05", "text-[#b33a35]"]]} />,
  n3: <Stack a="1.00" rows={[["+.05", "text-[#b33a35]"], ["−.02", "text-[#b33a35]"]]} />,
  n4: <Stack a="1.00" rows={[["+.05", "text-[#b33a35]"], ["−.00", "text-[#999]"]]} />,
  n5: <Stack a="1.00" rows={[["+.00", "text-[#999]"], ["−.02", "text-[#b33a35]"]]} />,
  n6: <span className="text-[11.500px] text-[#444] font-semibold border border-[#b33a35] px-px leading-[12px]">1.00</span>,
  n7: <span className="text-[11.500px] text-[#444]"><span className="text-[#b33a35]">(</span>1.00<span className="text-[#b33a35]">)</span></span>,
  h1: <span className="text-[11.500px] text-[#3a3ac0] font-semibold">10H7</span>,
  h2: <Tol a="10H7" b="(10.01" c="10" />,
  h3: <Tol a="10H7" b="(0.015" c="0" />,
  h4: <Tol a="10" b="(0.015" c="0" />,
};

const GAP: Record<string, string> = {
  _1: "w-px",
  _2: "w-[2px]",
  _3: "w-[3px]",
  _4: "w-[4px]",
  _6: "w-[6px]",
};

function Token({ t }: { t: string }) {
  if (t in GAP) return <div className={`${GAP[t]} shrink-0`} />;
  if (t === "|") return <div className="w-px mx-[2px] my-1 bg-[#d5d5d5] shrink-0" />;
  if (t === "v")
    return (
      <div className="w-[11px] shrink-0 flex items-center justify-center">
        <div className="w-0 h-0 border-x-[3.500px] border-x-transparent border-t-[4px] border-t-[#222]" />
      </div>
    );
  if (t === "vb")
    return (
      <div className="w-[11px] shrink-0 flex items-end justify-center pb-[6px]">
        <div className="w-0 h-0 border-x-[3.500px] border-x-transparent border-t-[4px] border-t-[#222]" />
      </div>
    );
  if (t === "g")
    return (
      <div className="w-[8px] shrink-0 flex justify-center py-1">
        <div className="w-[3px] border-l-[3px] border-dotted border-[#aaa]" />
      </div>
    );
  if (t in TXT) return <div className="w-[31px] shrink-0 flex items-center justify-center">{TXT[t]}</div>;
  return (
    <div className="w-[31px] shrink-0 flex items-center justify-center">
      <Ico n={t} />
    </div>
  );
}

function Group({ items }: { items: (string | React.ReactNode)[] }) {
  return (
    <div className="flex items-stretch h-full border-r-2 border-b-2 border-[#e9e9e9] pr-[2px] pt-[2px]">
      {items.map((t, i) => (typeof t === "string" ? <Token key={i} t={t} /> : <React.Fragment key={i}>{t}</React.Fragment>))}
    </div>
  );
}

const MENU: [string, string, string][] = [
  ["文件", "F", "w-[49px]"],
  ["编辑", "E", "w-[49px]"],
  ["视图", "V", "w-[51px]"],
  ["插入", "S", "w-[48px]"],
  ["格式", "R", "w-[50px]"],
  ["工具", "T", "w-[50px]"],
  ["装配", "A", "w-[51px]"],
  ["信息", "I", "w-[45px]"],
  ["分析", "L", "w-[56px]"],
  ["首选项", "P", "w-[61px]"],
  ["窗口", "O", "w-[52px]"],
];

function Select({ text, cls }: { text: string; cls: string }) {
  return (
    <div className={`${cls} h-5 border border-[#a9a9a9] bg-white flex items-center justify-between pl-[2px] pr-[6px] text-[11.500px] text-[#222]`}>
      <span>{text}</span>
      <div className="w-0 h-0 border-x-[4px] border-x-transparent border-t-[4px] border-t-[#222]" />
    </div>
  );
}

function SnapBtn({ n, on, cls = "" }: { n: string; on?: boolean; cls?: string }) {
  return (
    <div className={`w-[22.700px] h-[22px] shrink-0 flex items-center justify-center ${on ? "bg-[#c8d7d6] border border-[#a9bebb]" : ""} ${cls}`}>
      <Ico n={n} cls="w-[19px] h-[19px] shrink-0" />
    </div>
  );
}

type TreeRow = {
  pad: string;
  exp?: "+" | "-";
  mark?: "tick" | "box" | "q";
  icon?: string;
  text?: string;
  dim?: boolean;
  bold?: boolean;
  ok?: boolean;
};

const TREE: TreeRow[] = [
  { pad: "pl-[5px]", exp: "-", mark: "tick", icon: "tsheets", text: "图纸" },
  { pad: "pl-[23.500px]", exp: "-", mark: "tick", icon: "tsheet", text: '图纸页 "Sheet 1" (工作的-活动)', ok: true },
  { pad: "pl-[42.500px]", exp: "+", mark: "tick", icon: "ttop", text: '导入的 "Top@1"', ok: true },
  { pad: "pl-[58px]", mark: "tick", icon: "tsec", text: '截面 "SX@5" A', ok: true },
  { pad: "pl-[58px]", mark: "tick", icon: "tproj", text: '投影 "ORTHO@4"', ok: true },
  { pad: "pl-[39px]", mark: "q", icon: "tfolder", text: "过时" },
  { pad: "pl-[5px]", exp: "+", icon: "tfolder", text: "组" },
  { pad: "pl-[5px]", exp: "-", icon: "tfolder", text: "模型历史记录" },
  { pad: "pl-[40px]", mark: "box", icon: "tcsys", text: "基准坐标系 (0)", dim: true, ok: true },
  { pad: "pl-[40px]", mark: "box", icon: "tsketch", text: '草图 (1) "SKETCH_000"', dim: true, ok: true },
  { pad: "pl-[40px]", mark: "box", icon: "textr", text: "拉伸 (2)", ok: true },
  { pad: "pl-[40px]", mark: "box", icon: "textr", text: "拉伸 (3)", ok: true },
  { pad: "pl-[40px]", mark: "box", icon: "textr", text: "拉伸 (4)", ok: true },
  { pad: "pl-[40px]", mark: "box", icon: "tblend", text: "边倒圆 (5)", ok: true },
  { pad: "pl-[40px]", mark: "box", icon: "tblend", text: "边倒圆 (6)", ok: true },
  { pad: "pl-[40px]", mark: "box", icon: "thole", text: "简单孔 (7)", bold: true, ok: true },
  { pad: "" },
  { pad: "" },
  { pad: "" },
  { pad: "" },
  { pad: "" },
  { pad: "" },
];

const Tick = () => (
  <svg viewBox="0 0 14 14" className="w-[14px] h-[14px] shrink-0">
    <path d="M1 8l2.500-2 2.500 3L11.500 1 13.500 2.500 6.500 13H5z" fill="#18ad2e" />
  </svg>
);

function Mark({ m }: { m?: TreeRow["mark"] }) {
  if (m === "tick") return <div className="w-[14px] mr-px shrink-0"><Tick /></div>;
  if (m === "q") return <div className="w-[14px] mr-px shrink-0 text-center text-[15px] leading-4 font-bold text-[#e6c62a] [text-shadow:0_0_1px_#555]">?</div>;
  if (m === "box")
    return (
      <div className="w-[12px] h-[12px] mr-[3px] shrink-0 border border-[#222] bg-white flex items-center justify-center">
        <Tick />
      </div>
    );
  return null;
}

function Tree() {
  return (
    <div className="relative ml-[7px] mr-[9px] border border-[#e4e4e4] h-[470px] flex flex-col">
      <div className="flex h-[22px] pt-[2px] bg-[#f0f0f0] border-b-2 border-[#dcdcdc] text-[12px] text-[#333] shrink-0">
        <div className="w-[262px] border-r-2 border-[#d9d9d9] flex items-center pl-[6px]">
          <span>名称</span>
          <div className="ml-[18px] w-0 h-0 border-x-[4.500px] border-x-transparent border-b-[5px] border-b-[#111]" />
        </div>
        <div className="flex-1 flex items-center pl-[6px]">最新</div>
      </div>
      <div className="flex-1 overflow-hidden">
        {TREE.map((r, i) => (
          <div key={i} className={`flex h-5 border-b border-[#ececec] ${i % 2 ? "bg-[#f8f8f8]" : "bg-white"}`}>
            <div className={`w-[262px] border-r border-[#ececec] flex items-center ${r.pad}`}>
              {r.exp && (
                <div className={`w-[9px] h-[9px] border border-[#999] bg-white shrink-0 relative ${r.mark ? "mr-[6px]" : "mr-[4px]"}`}>
                  <div className="absolute left-[1px] right-[1px] top-[3px] h-px bg-[#222]" />
                  {r.exp === "+" && <div className="absolute top-[1px] bottom-[1px] left-[3px] w-px bg-[#222]" />}
                </div>
              )}
              <Mark m={r.mark} />
              {r.icon && <Ico n={r.icon} cls="w-4 h-4 shrink-0" />}
              {r.text && (
                <span className={`ml-[3px] text-[12px] whitespace-pre font-['Noto_Sans','Noto_Sans_CJK_SC',sans-serif] leading-4 ${r.dim ? "text-[#a9a9a9]" : "text-[#222]"} ${r.bold ? "font-bold" : ""}`}>
                  {r.text}
                </span>
              )}
            </div>
            <div className="flex-1 flex items-center pl-[5px]">{r.ok && <Tick />}</div>
          </div>
        ))}
      </div>
      <svg className="absolute left-0 top-0 pointer-events-none" width="264" height="400" viewBox="40 250 264 400" fill="none" stroke="#aaa" strokeDasharray="1 1">
        <path d="M49.500 288V410M68.500 298V382M87.500 318V362M68.500 428V582M55 282h5M74 302h5M93 322h5M87 342h11M87 362h11M68 382h11M55 402h3M55 422h3" />
        <path d="M68 442h12M68 462h12M68 482h12M68 502h12M68 522h12M68 542h12M68 562h12M68 582h12" />
      </svg>
      <div className="h-[15px] bg-[#f0f0f0] flex items-center justify-between px-[2px] shrink-0 relative">
        <ChevronLeft className="w-[13px] h-[13px] text-[#555]" strokeWidth={3} />
        <div className="absolute left-[17px] top-0 bottom-0 w-[187px] bg-[#cdcdcd]" />
        <ChevronRight className="w-[13px] h-[13px] text-[#555]" strokeWidth={3} />
      </div>
    </div>
  );
}

function Drawing() {
  const thin = { stroke: "#222", strokeWidth: 0.8, fill: "none" };
  const dimT = { fontSize: 8, fill: "#333", stroke: "none", fontFamily: "Liberation Sans, Noto Sans CJK SC, sans-serif" } as const;
  const cjk = { fontSize: 6, fill: "#222", stroke: "none", fontWeight: 700, fontFamily: "Noto Sans CJK SC, sans-serif", textAnchor: "middle" } as const;
  const Arrow = ({ x, y, dir }: { x: number; y: number; dir: "l" | "r" | "u" | "d" }) => {
    const p = { l: `${x},${y} ${x + 6},${y - 1.5} ${x + 6},${y + 1.5}`, r: `${x},${y} ${x - 6},${y - 1.5} ${x - 6},${y + 1.5}`, u: `${x},${y} ${x - 1.5},${y + 6} ${x + 1.5},${y + 6}`, d: `${x},${y} ${x - 1.5},${y - 6} ${x + 1.5},${y - 6}` }[dir];
    return <polygon points={p} fill="#222" stroke="none" />;
  };
  return (
    <svg viewBox="364 220 1236 583" className="w-full h-full block">
      <defs>
        <pattern id="hatch" width="4.600" height="4.600" patternUnits="userSpaceOnUse" patternTransform="rotate(-45)">
          <line x1="0" y1="0" x2="4.600" y2="0" stroke="#333" strokeWidth="0.700" />
        </pattern>
      </defs>
      <rect x="580" y="228" width="804" height="569" fill="none" stroke="#888" strokeWidth="1.200" strokeDasharray="12 2" />
      <rect x="628" y="237" width="747" height="550" fill="none" stroke="#000" strokeWidth="1.500" />
      <path d="M628 256h107V237" fill="none" stroke="#666" strokeWidth="1.200" />

      {/* left strip */}
      <g stroke="#111" strokeWidth="1" fill="none">
        <path d="M580 592h48M580 606h48M580 625h48M580 638h48M580 657h48M580 671h48M580 689h48M580 703h48M580 722h48M580 736h48M580 755h48M580 769h48" />
      </g>
      <g {...cjk} fontSize="8">
        <text x="604" y="602">借通用件登记</text>
        <text x="604" y="635">描　图</text>
        <text x="604" y="667">校　核</text>
        <text x="604" y="699">旧底图总号</text>
        <text x="604" y="732">签　字</text>
        <text x="604" y="765">日　期</text>
      </g>

      {/* section view */}
      <text x="840" y="340" fontSize="8.500" letterSpacing="3.400" fill="#333" fontFamily="Liberation Sans">SECTION  A-A</text>
      <text x="883" y="351" textAnchor="middle" {...dimT}>200</text>
      <path d="M845 350v14M921.500 350v14M845 354h76.500" {...thin} />
      <Arrow x={845} y={354} dir="l" />
      <Arrow x={921.500} y={354} dir="r" />
      <path d="M787 383h48c6 0 10-6 10-13v-6h76v6c0 7 6 13 14 13h44v38H787z" fill="url(#hatch)" stroke="#000" strokeWidth="1.300" />
      <rect x="796.500" y="383" width="19.500" height="38" fill="#ccc" stroke="#000" strokeWidth="1.200" />
      <rect x="863.500" y="364" width="38.500" height="57" fill="#ccc" stroke="#000" strokeWidth="1.200" />
      <path d="M806 378v50" stroke="#111" strokeWidth="0.800" strokeDasharray="12 2 3 2" />
      <path d="M883 358v70" stroke="#111" strokeWidth="0.800" strokeDasharray="12 2 3 2" />
      <path d="M921 364h102M979 383h24M979 421h44" stroke="#333" strokeWidth="0.800" />
      <path d="M999 383v38M1019 364v57" {...thin} />
      <Arrow x={999} y={383} dir="u" />
      <Arrow x={999} y={421} dir="d" />
      <Arrow x={1019} y={364} dir="u" />
      <Arrow x={1019} y={421} dir="d" />
      <text transform="rotate(-90 996 402)" x="996" y="402" textAnchor="middle" {...dimT}>100</text>
      <text transform="rotate(-90 1016 392)" x="1016" y="392" textAnchor="middle" {...dimT}>150</text>
      <path d="M796.500 421v34M816.500 421v34" stroke="#777" strokeWidth="1" />
      <path d="M759 452h57.500" {...thin} />
      <Arrow x={796.500} y={452} dir="r" />
      <Arrow x={816.500} y={452} dir="l" />
      <text x="760" y="449" {...dimT}>2 - ø 50</text>
      <path d="M863.500 421v32M902 421v32" stroke="#222" strokeWidth="0.900" />
      <path d="M863.500 448h38.500" {...thin} />
      <Arrow x={863.500} y={448} dir="l" />
      <Arrow x={902} y={448} dir="r" />
      <text x="873" y="445" {...dimT}>ø 100</text>

      {/* plan view */}
      <text x="883" y="489" textAnchor="middle" {...dimT}>500</text>
      <path d="M787.500 488v25M979 488v25M787.500 491H979" {...thin} />
      <Arrow x={787.500} y={491} dir="l" />
      <Arrow x={979} y={491} dir="r" />
      <path d="M787 513h192v95a20 20 0 0 1-20 20H807a20 20 0 0 1-20-20z" fill="none" stroke="#000" strokeWidth="1.400" />
      <circle cx="883" cy="570" r="38.500" fill="none" stroke="#000" strokeWidth="1.300" />
      <circle cx="883" cy="570" r="19" fill="none" stroke="#000" strokeWidth="1.300" />
      <path d="M835 570h92M883 526v88" stroke="#222" strokeWidth="0.700" strokeDasharray="14 2 3 2" />
      <circle cx="806.500" cy="608.500" r="9.500" fill="none" stroke="#000" strokeWidth="1.300" />
      <circle cx="960" cy="608.500" r="9.500" fill="none" stroke="#000" strokeWidth="1.300" />
      <path d="M792 608.500h29M806.500 594v29M946 608.500h29M960 594v29" stroke="#222" strokeWidth="0.700" strokeDasharray="5 1.500" />
      <path d="M979 570h19v-18M766 590v18h21M816 608h18v-13M834 582v-12h11" fill="none" stroke="#111" strokeWidth="1" />
      <path d="M960 608l22 26" {...thin} />
      <text x="998" y="595" {...dimT}>A</text>
      <text x="764" y="632" {...dimT}>A</text>
      <text transform="rotate(-50 982 632)" x="976" y="634" {...dimT}>R8</text>

      {/* side view */}
      <rect x="1088" y="513" width="39" height="114" fill="none" stroke="#000" strokeWidth="1.400" />
      <path d="M1127 522c2 6 6 10 12 10h7v76h-7c-6 0-10 4-12 10" fill="none" stroke="#000" strokeWidth="1.300" />
      <path d="M1132 570h20" stroke="#444" strokeWidth="0.800" />
      <path d="M1057 513h31M1057 627h31" stroke="#777" strokeWidth="1" />
      <path d="M1060 513v114" {...thin} />
      <Arrow x={1060} y={513} dir="u" />
      <Arrow x={1060} y={627} dir="d" />
      <text transform="rotate(-90 1058 570)" x="1058" y="570" textAnchor="middle" {...dimT}>300</text>

      {/* title block */}
      <g stroke="#000" strokeWidth="1.200" fill="none">
        <path d="M1030 787V701h345M1097 701v86M1145 701v86M1260 701v86M1059 701v86M1260 726h115M1260 735h115M1260 749h115M1260 760h115M1145 749h115M1317 735v25M1346 735v25M1030 740h115M1030 749h115" />
        <path d="M1030 787h230" />
      </g>
      <g stroke="#333" strokeWidth="0.800" fill="none">
        <path d="M1045 701v48M1126 701v48M1030 711h115M1030 720h115M1030 729h115M1030 758h115M1030 768h115M1030 777h115M1275 735v14M1291 735v14M1304 735v14" />
      </g>
      <g {...cjk}>
        <text x="1037.500" y="747">标记</text>
        <text x="1052" y="747">处数</text>
        <text x="1078" y="747">更改文件号</text>
        <text x="1111" y="747">签　字</text>
        <text x="1135" y="747">日期</text>
        <text x="1044" y="756">设　计</text>
        <text x="1044" y="765">校　对</text>
        <text x="1044" y="775">审　核</text>
        <text x="1044" y="784">批　准</text>
        <text x="1288" y="733">图样标记</text>
        <text x="1331" y="733">重　量</text>
        <text x="1360" y="733">比　例</text>
        <text x="1288" y="757">共　页</text>
        <text x="1346" y="757">第　页</text>
      </g>
    </svg>
  );
}

function Watermark() {
  return (
    <svg viewBox="1296 762 304 104" className="absolute left-[1296px] top-[762px] w-[304px] h-[104px] pointer-events-none">
      <path d="M1342 765l42 25v48l-42 24-42-24v-48z" fill="#79c8f0" stroke="#fff" strokeWidth="2" strokeOpacity="0.700" />
      <path d="M1342 765l-42 25v48l27 15c-14-18-18-38-6-62 5-10 13-18 21-26z" fill="#5f9bd6" />
      <path d="M1342 765c20 14 30 32 28 52-1 12-7 26-16 36l-12 9 42-24v-48z" fill="#79c8f0" />
      <path d="M1342 765c16 10 26 26 28 45l14-20z" fill="#5f94c8" />
      <path d="M1342 794l21 12v24l-21 12-21-12v-24z" fill="#77a6dc" stroke="#fff" strokeWidth="4" />
      <path d="M1342 818l19-11v22l-19 11z" fill="#85cdf0" />
      <path d="M1342 818v22M1342 818l-19-11M1342 818l19-11" stroke="#dff1fb" strokeWidth="1" fill="none" />
      <text x="1392" y="822" fontSize="44" fontWeight="700" fontFamily="Noto Sans CJK SC, sans-serif" fill="#74c4ec" stroke="#fff" strokeWidth="2" paintOrder="stroke" textLength="198">3D世界网</text>
      <text x="1395" y="844" fontSize="12" fontFamily="Liberation Sans, sans-serif" fill="#74c4ec" stroke="#fff" strokeWidth="1.500" paintOrder="stroke" textLength="196">WWW.3DSJW.COM</text>
    </svg>
  );
}

export default function App() {
  return (
    <div className="relative w-[1600px] h-[868px] overflow-hidden bg-white flex flex-col font-['Liberation_Sans','Noto_Sans_CJK_SC',sans-serif] text-[#222]">
      {/* title bar */}
      <div className="h-[26px] flex items-center shrink-0">
        <span className="w-[30px] text-center font-['Liberation_Serif',serif] text-[21px] text-[#a9bfce] border-r border-[#dcdcdc] leading-[22px] tracking-[-1px]">NX</span>
        <span className="ml-[5px] text-[12.500px]">NX 10 - 制图 - [001.prt]</span>
        <span className="ml-auto mr-[38px] text-[13px] text-[#2ba8a8]">S</span>
        <svg viewBox="0 0 62 14" className="w-[62px] h-[14px] mr-[6px]" fill="none" stroke="#555" strokeWidth="1.300">
          <path d="M3 12h8" strokeWidth="2" />
          <rect x="25" y="5" width="9" height="7" />
          <path d="M28 5V2h9v7h-3" />
          <path d="M49 1l11 11M60 1L49 12" strokeWidth="1.500" />
        </svg>
      </div>

      {/* menu */}
      <div className="h-[27px] bg-[#c8d7d6] flex items-center shrink-0 text-[11.500px] text-[#222]">
        <div className="w-[30px] flex items-center pl-[2px]">
          <div className="w-[4px] h-[18px] border-l-[2px] border-dotted border-[#999] mr-[1px]" />
          <Ico n="logo" cls="w-[18px] h-[18px]" />
        </div>
        {MENU.map(([t, k, w]) => (
          <div key={t} className={`${w} shrink-0 whitespace-nowrap`}>
            {t}(<u>{k}</u>)
          </div>
        ))}
        <div className="w-[60px] shrink-0 whitespace-nowrap">GC工具箱</div>
        <div className="whitespace-nowrap">帮助(<u>H</u>)</div>
        <svg viewBox="0 0 48 14" className="ml-auto mr-[8px] w-[48px] h-[14px]" fill="none" stroke="#222" strokeWidth="1.600">
          <path d="M3 12h8" strokeWidth="2" />
          <rect x="20" y="5" width="8" height="7" />
          <path d="M23 5V2h8v7h-3" />
          <path d="M38 2l9 9M47 2l-9 9" strokeWidth="2.200" />
        </svg>
      </div>

      {/* toolbars */}
      <div className="h-[34px] flex shrink-0">
        <Group
          items={[
            "g",
            <div key="start" className="w-[64.500px] flex items-center shrink-0">
              <div className="w-[31px] flex justify-center"><Ico n="globe" /></div>
              <span className="text-[11.500px]">启动</span>
              <div className="ml-[2px] w-0 h-0 border-x-[3.500px] border-x-transparent border-t-[4px] border-t-[#222]" />
            </div>,
            "file", "folder", "save", "|", "cut", "copy", "paste", "del", "|", "_2", "undo", "v", "redo", "|", "_2", "star", "v", "|", "info", "|",
            <div key="search" className="ml-[7px] mr-[5px] my-[5px] w-[123px] h-5 border border-[#a9a9a9] flex items-center justify-between pl-[2px] pr-[2px] text-[11.500px] shrink-0">
              <span>查找命令</span>
              <svg viewBox="0 0 16 16" className="w-4 h-4" fill="none" stroke="#555" strokeWidth="1.200">
                <circle cx="10" cy="6" r="4.500" fill="#fff" />
                <circle cx="10" cy="6" r="2.500" />
                <path d="M6.500 9.500L2 14" strokeWidth="2.200" />
              </svg>
            </div>,
            "vb",
          ]}
        />
        <Group items={["g", "fit", "_1", "v", "vb"]} />
        <Group items={["g", "layers", "|", "hand", "palette", "|", "playd", "v", "|", "antenna", "_3", "v", "ruler", "vb"]} />
      </div>
      <div className="h-[34px] flex shrink-0">
        <Group items={["g", "newsheet", "|", "wand", "sheetcube", "gridsheet", "sect", "detail", "hatch", "projsec", "curve", "broken", "|", "sheetarrow", "|", "_3", "swap", "v", "vb"]} />
        <Group items={["g", "bolt", "v", "vb"]} />
        <Group items={["g", "_3", "abox", "flag", "abal", "zoomc", "seven", "sqrt", "angle", "|", "xx", "corner", "|", "target", "v", "photo", "vb"]} />
        <Group items={["g", "bow1", "v", "bow2", "bow3", "bow4", "vb"]} />
        <Group items={["g", "astyle", "wrencha", "vb"]} />
        <div className="w-[83px]" />
        <Group items={["g", "tnew", "tgrid", "t7", "tcolor", "tlink", "vb"]} />
      </div>
      <div className="h-[34px] flex shrink-0">
        <Group items={["g", "nodes", "stack", "stacklist", "|", "tag", "|", "chk1", "chk2", "chk3", "_4", "abc", "v", "_3"]} />
        <Group items={["g", "sheets", "stack2", "binoct", "wrmesh", "list123", "|", "abc", "|", "axes", "|", "_2", "hbox", "vbox", "cbox", "|", "_1", "dashg", "bindim", "bin10", "wrdim", "xdim", "abcdim", "|", "_1", "ygrid", "tri", "tabletri", "aarrow", "ball", "xyz", "blank", "tbl12", "note", "broom", "|", "gears", "gear", "|", "spring", "v"]} />
      </div>
      <div className="h-[34px] flex shrink-0">
        <Group items={["g", "dim", "|", "n1", "n2", "n3", "n4", "n5", "n6", "n7", "h1", "h2", "h3", "h4", "|", "_3", "r1", "r2", "|", "_2", "cir1", "cir2", "ret", "vb"]} />
        <Group items={["g", "_3", "line2", "arc3", "poly", "heart", "sksec", "surf1", "surf2", "vb"]} />
      </div>

      {/* selection bar */}
      <div className="h-[31px] flex items-center shrink-0 border-b-2 border-[#8e979b] pl-[5px] pt-[3px]">
        <Select text="无选择过滤器" cls="w-[132px]" />
        <Select text="整个装配" cls="w-[138px] ml-[7px]" />
        <div className="w-px h-[22px] bg-[#d5d5d5] mx-[7px]" />
        <SnapBtn n="f1" cls="-mr-[6px]" />
        <SnapBtn n="f2" />
        <Token t="v" />
        <SnapBtn n="f3" />
        <SnapBtn n="f4" />
        <div className="w-px h-[22px] bg-[#d5d5d5] mx-[2px]" />
        <Token t="_1" />
        <SnapBtn n="sel" />
        <Token t="v" />
        <div className="w-px h-[22px] bg-[#d5d5d5] mx-[3px]" />
        <SnapBtn n="s1" on />
        <SnapBtn n="s2" on />
        <SnapBtn n="s3" on />
        <SnapBtn n="s4" />
        <SnapBtn n="s5" on />
        <SnapBtn n="s6" />
        <SnapBtn n="s7" on />
        <SnapBtn n="s8" />
        <SnapBtn n="s9" on />
        <SnapBtn n="s10" on />
        <SnapBtn n="s11" />
        <div className="ml-auto mr-[2px]"><Token t="v" /></div>
      </div>

      {/* main */}
      <div className="flex-1 flex min-h-0">
        <div className="w-[32px] bg-[#dcdcdc] border-r border-[#9a9a9a] shrink-0 flex flex-col">
          <div className="h-[31px] flex items-center justify-center font-['Liberation_Serif',serif] text-[11px]">A</div>
          <div className="h-[52px] flex items-center justify-center pt-[12px]"><Ico n="parts" cls="w-7 h-7" /></div>
          <div className="h-[45px] bg-white border border-r-0 border-[#9a9a9a] ml-[2px] -mr-px flex items-center justify-center"><Ico n="assy" cls="w-[26px] h-[26px]" /></div>
          <div className="h-[46px] flex items-center justify-center"><Ico n="books" cls="w-7 h-7" /></div>
          <div className="h-[56px] flex items-center justify-center"><Ico n="wifi" cls="w-7 h-7" /></div>
          <div className="h-[52px] flex items-center justify-center"><Ico n="docg" cls="w-[26px] h-[26px]" /></div>
          <div className="h-[54px] flex items-center justify-center"><Ico n="clock" cls="w-[26px] h-[26px]" /></div>
          <div className="h-[32px] flex items-center justify-center"><Ico n="tools" cls="w-[26px] h-[26px]" /></div>
        </div>
        <div className="w-[332px] shrink-0 bg-white border-r border-[#a8a8a8] flex flex-col">
          <div className="h-[29px] flex items-center pl-[10px] pr-[15px] pt-[2px] justify-between text-[12px] text-[#222]">
            <span>部件导航器</span>
            <div className="w-[12px] h-[11px] border border-[#222] border-t-2" />
          </div>
          <Tree />
          <div className="ml-[6px] mr-[8px] h-[6px] mt-[2px] bg-[#e2e2e2] border border-[#9a9a9a] shrink-0" />
          {["相依性", "细节", "预览"].map((t) => (
            <div key={t} className="ml-[6px] mr-[8px] h-[24px] pt-[4px] border-b-[3px] border-[#cccccc] flex items-center justify-between px-[6px] text-[14px] text-[#2b88b8] first:mt-[-1px] shrink-0">
              <span>{t}</span>
              <span className="font-['Liberation_Serif',serif] text-[12px] mr-[4px]">I</span>
            </div>
          ))}
        </div>
        <div className="flex-1 relative bg-[#cccccc] min-w-0">
          <Drawing />
          <span className="absolute left-[10px] bottom-[1px] text-[13px] text-[#333]">"Sheet 1"</span>
        </div>
      </div>

      {/* sketch bar */}
      <div className="h-[35px] flex items-center shrink-0 border-b border-[#bbb] bg-white pt-[2px]">
        <Token t="g" />
        <Select text="Sheet 1" cls="w-[97px] ml-[-1px]" />
        <div className="ml-[8px] w-[24px] h-[24px] bg-[#d8d8d8] flex items-center justify-center">
          <svg viewBox="0 0 20 20" className="w-[18px] h-[18px]">
            <path d="M2 3l15-1-1 13-12 1z" fill="#eee" stroke="#aaa" />
            <path d="M4 4h3v3H4zM10 4h3v3h-3zM7 7h3v3H7zM13 7h3v3h-3zM4 10h3v3H4zM10 10h3v3h-3z" fill="#999" />
          </svg>
        </div>
        <span className="ml-[5px] w-[49px] text-[11px] text-[#bbb] whitespace-nowrap">完成草图</span>
        {["bcurve", "line2", "arc3", "bcircle", "bfil1", "bfil2", "brect", "bhex", "poly", "bplus", "bcyl", "v", "|", "t1", "t2", "t3", "|", "p1", "p2", "p3", "v", "v"].map((t, i) => (
          <div key={i} className="flex items-center self-stretch py-[5px]"><Token t={t} /></div>
        ))}
      </div>

      {/* status */}
      <div className="h-[22px] flex items-center pl-[3px] text-[11px] font-semibold text-[#222] shrink-0 relative">
        选择对象并使用 MB3，或双击，或按住并拖动来移动视图、尺寸或注释
        <div className="absolute right-[58px] top-[8px] flex gap-[4px] items-center">
          <svg viewBox="0 0 14 14" className="w-[14px] h-[13px]">
            <rect width="14" height="14" fill="#d8d8d8" />
            <path d="M3 3h2v2H3zM7 3h2v2H7zM5 5h2v2H5zM9 5h2v2H9zM3 7h2v2H3zM7 7h2v2H7z" fill="#888" />
          </svg>
          <svg viewBox="0 0 14 14" className="w-[14px] h-[14px]" fill="none">
            <path d="M0 3V0h3M11 0h3v3M14 11v3h-3M3 14H0v-3" stroke="#999" />
            <rect x="3" y="3" width="8" height="8" fill="#6f9ad8" stroke="#3a5a9a" />
            <rect x="3" y="3" width="8" height="2" fill="#2a4a8a" />
          </svg>
        </div>
      </div>

      {/* taskbar */}
      <div className="h-[8px] bg-[#020b10] shrink-0 relative overflow-hidden flex">
        <div className="ml-[415px] w-[47px] bg-[#2c3236]" />
        <span className="absolute left-[1496px] top-[5px] text-[12px] leading-[12px] text-white">16:19</span>
      </div>

      <Watermark />
    </div>
  );
}
